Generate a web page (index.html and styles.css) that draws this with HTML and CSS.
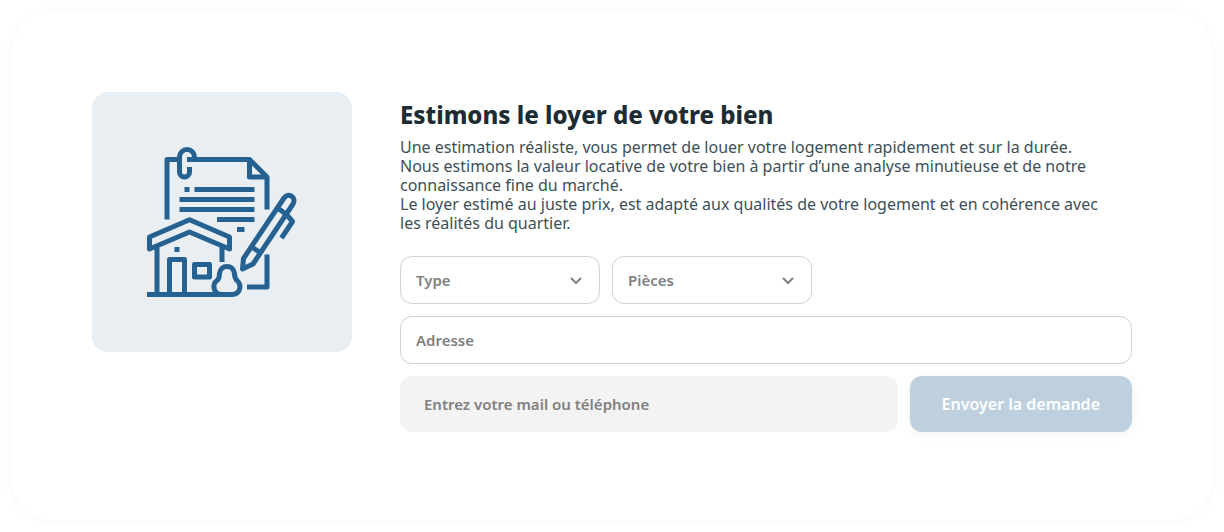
FILE: index.html
```html
<!DOCTYPE html>
<html lang="fr">
<head>
<meta charset="utf-8">
<meta name="viewport" content="width=device-width, initial-scale=1">
<title>Estimons le loyer de votre bien</title>
<link rel="stylesheet" href="styles.css">
</head>
<body>
<main class="card">
  <div class="illustration">
    <svg class="illustration-icon" viewBox="147 147 150 150" aria-hidden="true">
      <path d="M167 219.500V159.500H177M187 159.500H249.500L267 177V209.500M249.500 159.500V177H267M267 254.500V287H247"/>
      <path d="M194.500 162V157a7.500 7.500 0 0 0-15 0V172a5 5 0 0 0 10 0V167"/>
      <path d="M184.500 189.500h5M194.500 189.500h60M179.500 199.500h75M179.500 209.500h75M217 219.500h37.500M237 229.500h7.500"/>
      <path d="M189.500 219.700L229.500 237V249L189.500 232L149.500 249V237ZM157 247V292M222 247V262M174.500 249.500h5"/>
      <path d="M169.500 294V259.500H184.500V294M194.500 264.500h15v12.500h-15z"/>
      <path d="M221.500 294.500C213 294.500 212 284 217 280.500C219.500 278.500 219.500 276 219.500 273.500C220 269 223 266.500 227 266.500S234 269 234.500 273.500C234.500 276 235 278.500 237 280.500C242 285 240.500 294.500 232 294.500H147"/>
      <path d="M243.500 258.500L284 198C288 192 297 197 293 204L253 264L242.500 269ZM251 246.500L260 252.500M279 209L286.500 214.500L292.500 221.500L281.500 238"/>
    </svg>
  </div>
  <section class="content">
    <h1 class="title">Estimons le loyer de votre bien</h1>
    <p class="description">Une estimation réaliste, vous permet de louer votre logement rapidement et sur la durée.<br>Nous estimons la valeur locative de votre bien à partir d’une analyse minutieuse et de notre connaissance fine du marché.<br>Le loyer estimé au juste prix, est adapté aux qualités de votre logement et en cohérence avec les réalités du quartier.</p>
    <form class="form">
      <div class="row">
        <div class="select-wrap">
          <select class="field" aria-label="Type"><option>Type</option></select>
          <svg class="chevron" viewBox="0 0 12 8" aria-hidden="true"><path d="M1 1l5 5 5-5"/></svg>
        </div>
        <div class="select-wrap">
          <select class="field" aria-label="Pièces"><option>Pièces</option></select>
          <svg class="chevron" viewBox="0 0 12 8" aria-hidden="true"><path d="M1 1l5 5 5-5"/></svg>
        </div>
      </div>
      <input class="field" type="text" placeholder="Adresse" aria-label="Adresse">
      <div class="row">
        <input class="contact" type="text" placeholder="Entrez votre mail ou téléphone" aria-label="Entrez votre mail ou téléphone">
        <button class="submit" type="button">Envoyer la demande</button>
      </div>
    </form>
  </section>
</main>
</body>
</html>
```
FILE: styles.css
```css
* { box-sizing: border-box; }
body {
  margin: 0;
  padding: 12px;
  background: #fff;
  font-family: "Noto Sans", sans-serif;
}
.card {
  display: flex;
  align-items: flex-start;
  gap: 48px;
  padding: 80px 80px 88px;
  border-radius: 40px;
  background: #fff;
  box-shadow: 0 0 12px rgba(0, 0, 0, 0.04);
}
.illustration {
  flex: none;
  display: grid;
  place-items: center;
  width: 260px;
  height: 260px;
  border-radius: 16px;
  background: #e9eef3;
}
.illustration-icon {
  width: 150px;
  height: 150px;
  fill: none;
  stroke: #256292;
  stroke-width: 5;
  stroke-linejoin: round;
}
.content { flex: 1; min-width: 0; padding-top: 8px; }
.title {
  margin: 0 0 8px;
  color: #1d2b33;
  font-size: 24px;
  line-height: 30px;
  font-weight: 800;
}
.description {
  margin: 0 0 23px;
  padding-right: 16px;
  color: #3d4f58;
  font-size: 16px;
  line-height: 19px;
}
.form { display: grid; gap: 12px; }
.row { display: flex; gap: 12px; }
.select-wrap { position: relative; flex: 0 1 200px; }
.field {
  appearance: none;
  width: 100%;
  height: 48px;
  padding: 0 15px;
  border: 1px solid #d2d2d2;
  border-radius: 12px;
  background: #fff;
  color: #808080;
  font: 600 15px "Noto Sans", sans-serif;
}
.field::placeholder, .contact::placeholder { color: #808080; opacity: 1; }
.chevron {
  position: absolute;
  right: 18px;
  top: 21px;
  width: 12px;
  height: 8px;
  fill: none;
  stroke: #808080;
  stroke-width: 2;
  pointer-events: none;
}
.contact {
  flex: 1;
  min-width: 0;
  height: 56px;
  padding: 0 24px;
  border: 0;
  border-radius: 12px;
  background: #f3f3f3;
  color: #808080;
  font: 600 15px "Noto Sans", sans-serif;
}
.submit {
  height: 56px;
  padding: 0 32px;
  border: 0;
  border-radius: 12px;
  background: #becfde;
  color: #fff;
  font: 600 16px "Noto Sans", sans-serif;
  box-shadow: 0 2px 12px rgba(0, 0, 0, 0.05);
}
```
